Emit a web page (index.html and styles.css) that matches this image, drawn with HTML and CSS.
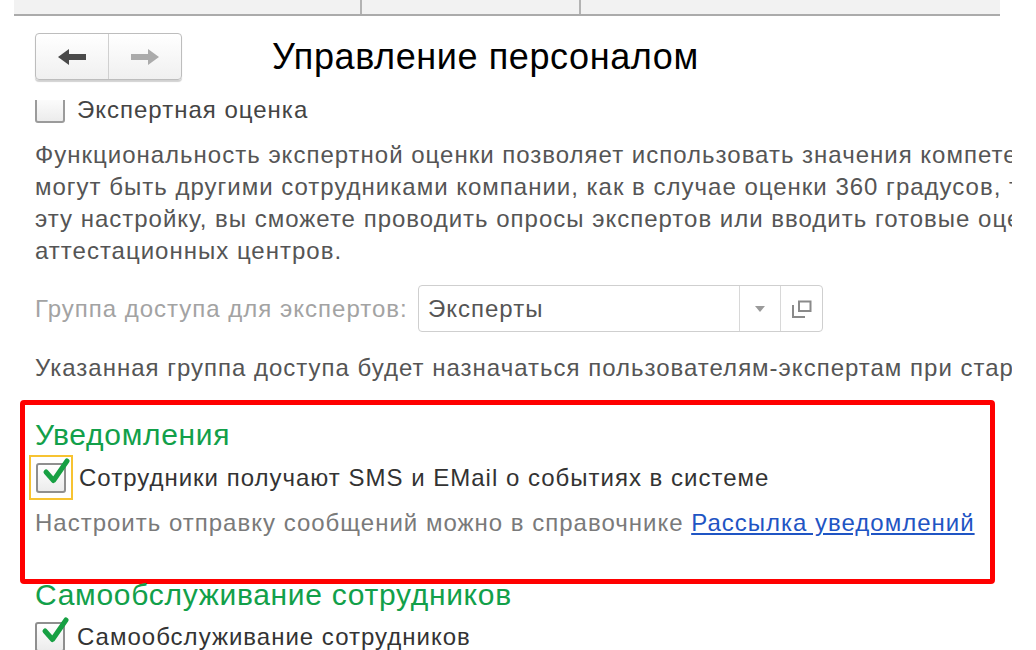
FILE: index.html
```html
<!DOCTYPE html>
<html lang="ru">
<head>
<meta charset="utf-8">
<title>Управление персоналом</title>
<link rel="stylesheet" href="styles.css">
</head>
<body>
<div class="topbar">
  <div class="tab tab-a"></div>
  <div class="tab tab-b"></div>
  <div class="tab tab-c"></div>
</div>
<div class="header">
  <div class="nav">
    <button class="nav-btn" type="button" aria-label="Назад">
      <svg width="28" height="16" viewBox="0 0 28 16"><path d="M0 8 L11 0 L11 5 L28 5 L28 11 L11 11 L11 16 Z" fill="#4a4a4a"/></svg>
    </button>
    <button class="nav-btn" type="button" aria-label="Вперёд">
      <svg width="28" height="16" viewBox="0 0 28 16"><path d="M28 8 L17 0 L17 5 L0 5 L0 11 L17 11 L17 16 Z" fill="#ababab"/></svg>
    </button>
  </div>
  <h1 class="title">Управление персоналом</h1>
</div>
<div class="content">
  <div class="check-row first-row">
    <span class="box"></span>
    <span class="label">Экспертная оценка</span>
  </div>
  <p class="note">Функциональность экспертной оценки позволяет использовать значения компетенций, которые выставляют эксперты. Эксперты<br>могут быть другими сотрудниками компании, как в случае оценки 360 градусов, так и внешними лицами. Включив<br>эту настройку, вы сможете проводить опросы экспертов или вводить готовые оценки от внешних<br>аттестационных центров.</p>
  <div class="field-row">
    <span class="field-label">Группа доступа для экспертов:</span>
    <div class="field">
      <span class="field-value">Эксперты</span>
      <span class="field-btn drop"><svg width="10" height="6" viewBox="0 0 10 6"><path d="M0 0 L10 0 L5 6 Z" fill="#9a9a9a"/></svg></span>
      <span class="field-btn open"><svg width="20" height="18" viewBox="0 0 20 18"><path d="M7 1.5 H18.5 V11 H7 Z" fill="none" stroke="#8a8a8a" stroke-width="2"/><path d="M1 5 V17 H13" fill="none" stroke="#8a8a8a" stroke-width="2"/></svg></span>
    </div>
  </div>
  <p class="note single">Указанная группа доступа будет назначаться пользователям-экспертам при старте опроса экспертов.</p>
  <section class="highlight">
    <h2 class="group-title">Уведомления</h2>
    <div class="check-row focused">
      <span class="focus-frame">
        <span class="box checked"><svg class="tick" width="34" height="24" viewBox="0 0 34 24"><path d="M10 12 L17.5 20.5 L31 1" fill="none" stroke="#17a043" stroke-width="5" stroke-linecap="round" stroke-linejoin="round"/></svg></span>
      </span>
      <span class="label dark">Сотрудники получают SMS и EMail о событиях в системе</span>
    </div>
    <p class="hint">Настроить отправку сообщений можно в справочнике <a href="#" class="link">Рассылка уведомлений</a></p>
  </section>
  <h2 class="group-title second">Самообслуживание сотрудников</h2>
  <div class="check-row last-row">
    <span class="box checked"><svg class="tick" width="34" height="24" viewBox="0 0 34 24"><path d="M10 12 L17.5 20.5 L31 1" fill="none" stroke="#17a043" stroke-width="5" stroke-linecap="round" stroke-linejoin="round"/></svg></span>
    <span class="label dark">Самообслуживание сотрудников</span>
  </div>
</div>
</body>
</html>
```
FILE: styles.css
```css
* { box-sizing: border-box; }
html, body { margin: 0; padding: 0; background: #fff; }
body {
  font-family: "Liberation Sans", Arial, sans-serif;
  color: #4d4d4d;
  width: 1036px;
  height: 650px;
  overflow: hidden;
}
.topbar {
  margin-left: 14px;
  width: 986px;
  height: 16px;
  background: #f2f2f2;
  border-bottom: 2px solid #ababab;
  display: flex;
}
.tab { height: 100%; border-right: 2px solid #b3b3b3; }
.tab-a { width: 348px; }
.tab-b { width: 219px; }
.tab-c { flex: 1; border-right: 0; }

.header {
  display: flex;
  align-items: center;
  padding: 17px 0 0 35px;
}
.nav {
  display: flex;
  flex: none;
  width: 147px;
  height: 47px;
  border: 1px solid #bdbdbd;
  border-radius: 4px;
  background: linear-gradient(#ffffff, #f0f0f0);
  box-shadow: 0 2px 1px rgba(0,0,0,0.18);
  overflow: hidden;
}
.nav-btn {
  flex: 1;
  border: 0;
  background: transparent;
  padding: 0;
  display: flex;
  align-items: center;
  justify-content: center;
}
.nav-btn + .nav-btn { border-left: 1px solid #d0d0d0; }
.title {
  margin: 0 0 0 90px;
  font-weight: normal;
  font-size: 36px;
  letter-spacing: 0.6px;
  color: #000;
  line-height: 47px;
  white-space: nowrap;
}

.content {
  margin-top: 20px;
  width: 1012px;
  height: 550px;
  overflow: hidden;
  padding-left: 35px;
}
.check-row {
  display: flex;
  align-items: center;
  white-space: nowrap;
}
.first-row { height: 20px; }
.first-row .label { line-height: 20px; }
.box {
  position: relative;
  flex: none;
  width: 30px;
  height: 30px;
  border: 2px solid #8f8f8f;
  border-radius: 3px;
  background: linear-gradient(#ffffff, #ececec);
}
.first-row .box { border-color: #9b9b9b; margin-top: -5px; }
.tick { position: absolute; left: -2px; top: -5px; overflow: visible; }
.label {
  font-size: 24px;
  letter-spacing: 1px;
  margin-left: 12px;
  color: #444;
}
.label.dark { color: #333; }
.note {
  margin: 19px 0 0;
  font-size: 24px;
  letter-spacing: 1px;
  line-height: 32px;
  white-space: nowrap;
  color: #555;
}
.note.single { margin-top: 20px; }
.field-row {
  display: flex;
  align-items: center;
  margin-top: 18px;
  height: 47px;
  white-space: nowrap;
}
.field-label {
  font-size: 24px;
  letter-spacing: 1px;
  color: #a3a3a3;
  width: 383px;
}
.field {
  display: flex;
  align-items: stretch;
  width: 405px;
  height: 47px;
  border: 1px solid #cfcfcf;
  border-radius: 4px;
}
.field-value {
  flex: 1;
  font-size: 24px;
  letter-spacing: 1px;
  color: #555;
  padding-left: 9px;
  display: flex;
  align-items: center;
}
.field-btn {
  display: flex;
  align-items: center;
  justify-content: center;
  border-left: 1px solid #d8d8d8;
}
.field-btn.drop { width: 41px; }
.field-btn.open { width: 42px; }

.highlight {
  margin: 16px 0 0 -15px;
  width: 975px;
  height: 184px;
  border: 5px solid #ff0000;
  border-radius: 4px;
  padding: 14px 0 0 10px;
}
.group-title {
  margin: 0;
  font-weight: normal;
  font-size: 30px;
  letter-spacing: 0.7px;
  line-height: 32px;
  color: #12a04a;
  white-space: nowrap;
}
.focused { margin-top: 4px; height: 45px; }
.focus-frame {
  display: flex;
  align-items: center;
  justify-content: center;
  width: 44px;
  height: 45px;
  margin-left: -6px;
  border: 2px solid #f7c331;
}
.focused .label { margin-left: 6px; }
.hint {
  margin: 7px 0 0;
  font-size: 24px;
  letter-spacing: 1px;
  line-height: 32px;
  color: #7a7a7a;
  white-space: nowrap;
}
.link { color: #1f55c4; text-decoration: underline; }
.group-title.second { margin-top: -4px; line-height: 30px; }
.last-row { margin-top: 12px; height: 30px; }
.last-row .label { margin-left: 12px; }
```
